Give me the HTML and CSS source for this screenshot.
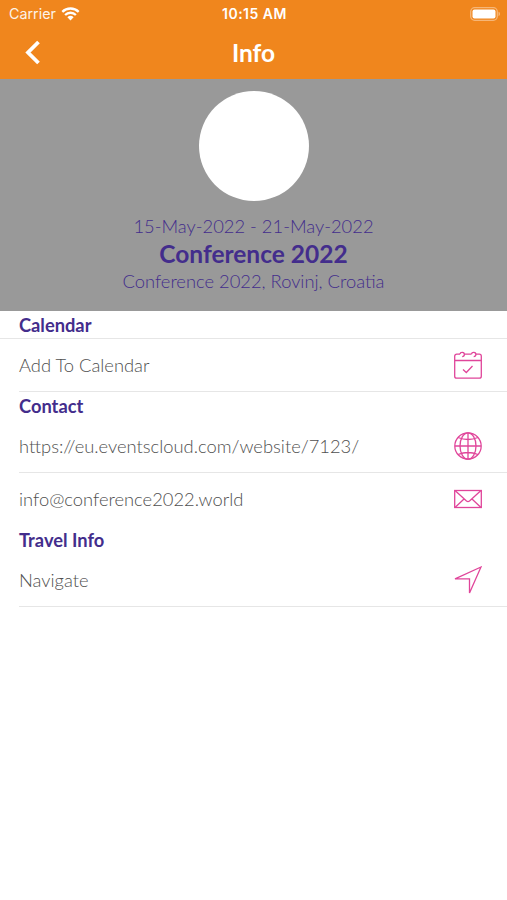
FILE: index.html
```
<!DOCTYPE html>
<html lang="en">
<head>
    <meta charset="UTF-8">
    <meta name="viewport" content="width=device-width, initial-scale=1.0">
    <title>Info</title>
    <link rel="stylesheet" href="styles.css">
</head>
<body>
    <header class="top">
        <div class="status-bar">
            <div class="carrier">
                <span>Carrier</span>
                <svg class="wifi" viewBox="0 0 18 14">
                    <path d="M.8 4.900a11.600 11.600 0 0 1 16.400 0M3.600 8a7.600 7.600 0 0 1 10.800 0" fill="none" stroke="#fff" stroke-width="2.300"/>
                    <path d="M5.900 10.200a4.600 4.600 0 0 1 6.200 0L9 13.400z" fill="#fff"/>
                </svg>
            </div>
            <span class="time">10:15 AM</span>
            <svg class="battery" viewBox="0 0 31 14">
                <rect x="0.700" y="0.700" width="26.600" height="12.600" rx="4" fill="none" stroke="#fff" stroke-opacity="0.4" stroke-width="1.300"/>
                <rect x="2.500" y="2.500" width="23" height="9" rx="2" fill="#fff"/>
                <path d="M28.500 4.800c2 .6 2 3.800 0 4.400z" fill="#fff" fill-opacity="0.4"/>
            </svg>
        </div>
        <nav class="nav-bar">
            <svg class="back" viewBox="0 0 18 26"><path d="M14.500 2L4 12.500l10.500 10.500" fill="none" stroke="#fff" stroke-width="3.800"/></svg>
            <h1>Info</h1>
        </nav>
    </header>

    <section class="event">
        <div class="logo"></div>
        <p>15-May-2022 - 21-May-2022</p>
        <h2>Conference 2022</h2>
        <p>Conference 2022, Rovinj, Croatia</p>
    </section>

    <main>
        <h3 class="ruled">Calendar</h3>
        <div class="row">
            <span>Add To Calendar</span>
            <svg class="icon" viewBox="0 0 28 28">
                <path d="M6 3.200H2.700a2 2 0 0 0-2 2v20a2 2 0 0 0 2 2h22.600a2 2 0 0 0 2-2v-20a2 2 0 0 0-2-2h-3.300M10.500 3.200h7M1 9.500h26M9 18.500l3.300 3 6.200-6.500"/>
                <path d="M6 3.200a2.200 2.200 0 1 1 2.200 2.500M17.500 3.200a2.200 2.200 0 1 1 2.200 2.500"/>
            </svg>
        </div>
        <h3>Contact</h3>
        <div class="row">
            <span>https://eu.eventscloud.com/website/7123/</span>
            <svg class="icon" viewBox="0 0 28 28">
                <circle cx="14" cy="14" r="13.200"/>
                <ellipse cx="14" cy="14" rx="8" ry="13.200"/>
                <path d="M14 1v26M1 14h26M4 5.500q10 4 20 0M4 22.500q10-4 20 0"/>
            </svg>
        </div>
        <div class="row last">
            <span>info@conference2022.world</span>
            <svg class="icon" viewBox="0 0 28 28">
                <rect x="0.700" y="5.500" width="26.600" height="17"/>
                <path d="M1 5.500l11.500 10.500q1.500 1.200 3 0L27 5.500M1 22.500l9-8.500M27 22.500l-9-8.500"/>
            </svg>
        </div>
        <h3>Travel Info</h3>
        <div class="row">
            <span>Navigate</span>
            <svg class="icon" viewBox="0 0 28 28"><path d="M27 1L1 12.800h14.500V27z"/></svg>
        </div>
    </main>
</body>
</html>
```
FILE: styles.css
```
* {
    box-sizing: border-box;
}
body {
    margin: 0;
    background: #fff;
    color: #505050;
    font-family: Lato, sans-serif;
    font-weight: 300;
}
h1, h2, h3, p {
    margin: 0;
}
.top {
    height: 79px;
    background: #f0861d;
    color: #fff;
}
.status-bar {
    display: grid;
    grid-template-columns: 1fr auto 1fr;
    align-items: center;
    height: 27px;
    padding: 0 7px 0 9px;
    font: 400 14.300px/27px Inter, sans-serif;
}
.carrier {
    display: flex;
    align-items: center;
    gap: 5px;
}
.carrier span {
    opacity: 0.9;
}
.wifi {
    width: 19px;
    height: 14px;
}
.time {
    font-weight: 600;
    font-size: 14px;
    letter-spacing: 0.5px;
}
.battery {
    width: 31px;
    height: 14px;
    justify-self: end;
    margin-right: -1px;
}
.nav-bar {
    display: grid;
    grid-template-columns: 42px 1fr 42px;
    align-items: center;
    height: 50px;
}
.back {
    width: 18px;
    height: 26px;
    margin-left: 24px;
}
.nav-bar h1 {
    font-size: 24.500px;
    line-height: 52px;
    text-align: center;
}
.event {
    height: 232px;
    padding-top: 12px;
    background: #999;
    color: #432d8c;
    text-align: center;
}
.logo {
    width: 110px;
    height: 110px;
    margin: 0 auto 12px;
    border-radius: 50%;
    background: #fff;
}
.event p {
    font-size: 18.350px;
    line-height: 27px;
}
.event h2 {
    font-size: 24.500px;
    line-height: 28px;
}
h3 {
    height: 27.300px;
    padding-left: 19px;
    color: #432d8c;
    font-size: 18.300px;
    line-height: 28px;
}
.ruled {
    height: 28px;
    border-bottom: 1px solid #e6e6e6;
}
.row {
    display: flex;
    align-items: center;
    justify-content: space-between;
    height: 53.300px;
    margin-left: 19px;
    padding-right: 25px;
    border-bottom: 1px solid #e6e6e6;
    font-size: 18.350px;
}
.row.last {
    border-bottom-color: transparent;
}
.icon {
    width: 28px;
    height: 28px;
    fill: none;
    stroke: #e0459a;
    stroke-width: 1.300;
}
```
